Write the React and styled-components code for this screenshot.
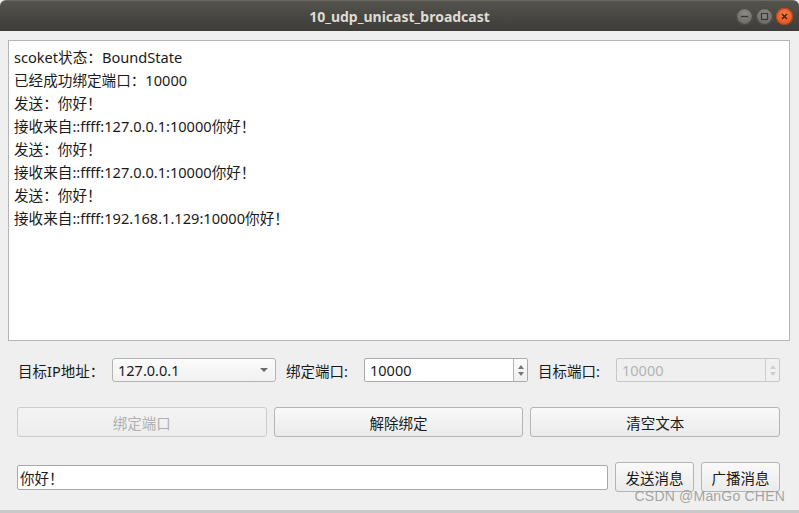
import React from "react"
import styled, { createGlobalStyle } from "styled-components"

const Global = createGlobalStyle`
    html, body {
        margin: 0;
        padding: 0;
        background: #efefef;
    }
    body {
        font-family: "Noto Sans", "Noto Sans CJK SC", sans-serif;
        font-size: 14.5px;
        color: #1a1a1a;
    }
`

const Window = styled.div`
    position: relative;
    width: 799px;
    height: 513px;
    display: flex;
    flex-direction: column;
    background: #efefef;
    box-sizing: border-box;
    border-bottom: 3px solid #c9c9c9;
    overflow: hidden;
`

const TitleBar = styled.div`
    height: 31px;
    flex: none;
    display: flex;
    align-items: center;
    justify-content: center;
    position: relative;
    background: linear-gradient(#54534e, #3d3c38);
    border-top: 1px solid #6a6964;
    border-radius: 6px 6px 0 0;
    box-sizing: border-box;
    color: #dfdbd2;
    font-weight: bold;
    font-size: 14px;
    font-family: "Noto Sans", sans-serif;
`

const WinButtons = styled.div`
    position: absolute;
    right: 6px;
    top: 7px;
    display: flex;
    gap: 3px;
`

const WinButton = styled.div`
    width: 17px;
    height: 17px;
    border-radius: 50%;
    display: flex;
    align-items: center;
    justify-content: center;
    background: ${({close}) => close
        ? "radial-gradient(circle at 50% 35%, #f47a4a, #df4a16)"
        : "radial-gradient(circle at 50% 35%, #8c8b86, #5f5e5a)"};
    box-shadow: inset 0 0 0 1px ${({close}) => close ? "#b9400f" : "#45443f"};
`

const Body = styled.div`
    flex: 1;
    display: flex;
    flex-direction: column;
    padding: 9px 9px 0 8px;
`

const TextArea = styled.div`
    height: 301px;
    box-sizing: border-box;
    background: #fff;
    border: 1px solid #b5b5b5;
    padding: 5px 5px;
    line-height: 23px;
    font-size: 14.6px;
`

const Controls = styled.div`
    display: flex;
    flex-direction: column;
    padding: 0 10px 0 9px;
`

const ParamRow = styled.div`
    margin-top: 17px;
    height: 24px;
    display: grid;
    grid-template-columns: 95px 164px 1fr 164px 1fr 164px;
    align-items: center;
`

const Label = styled.span`
    padding-left: ${({first}) => first ? "1px" : "10px"};
    white-space: nowrap;
`

const Combo = styled.div`
    height: 24px;
    box-sizing: border-box;
    border: 1px solid #b3b3b3;
    border-radius: 3px;
    background: linear-gradient(#fbfbfb, #f1f1f1);
    display: flex;
    align-items: center;
    justify-content: space-between;
    padding: 0 7px 0 5px;
`

const Arrow = styled.span`
    width: 0;
    height: 0;
    border-left: 4px solid transparent;
    border-right: 4px solid transparent;
    border-top: 4px solid #6a6a6a;
`

const Spin = styled.div`
    height: 24px;
    box-sizing: border-box;
    border: 1px solid ${({disabled}) => disabled ? "#c8c8c8" : "#aaaaaa"};
    border-radius: 2px;
    background: ${({disabled}) => disabled ? "#efefef" : "#fff"};
    color: ${({disabled}) => disabled ? "#b4b4b4" : "#1a1a1a"};
    display: flex;
    align-items: stretch;
`

const SpinText = styled.span`
    flex: 1;
    display: flex;
    align-items: center;
    padding-left: 5px;
`

const SpinButtons = styled.div`
    width: 13px;
    border-left: 1px solid ${({disabled}) => disabled ? "#cfcfcf" : "#b5b5b5"};
    background: ${({disabled}) => disabled ? "#f0f0f0" : "linear-gradient(#fbfbfb, #efefef)"};
    display: flex;
    flex-direction: column;
    align-items: center;
    justify-content: center;
    gap: 3px;
`

const Tri = styled.span`
    width: 0;
    height: 0;
    border-left: 3px solid transparent;
    border-right: 3px solid transparent;
    ${({up, c}) => up ? `border-bottom: 4px solid ${c};` : `border-top: 4px solid ${c};`}
`

const ButtonRow = styled.div`
    margin-top: 25px;
    display: grid;
    grid-template-columns: 1fr 1fr 1fr;
    gap: 7px;
`

const Button = styled.div`
    height: 30px;
    box-sizing: border-box;
    border: 1px solid ${({disabled}) => disabled ? "#cdcdcd" : "#b4b4b4"};
    border-radius: 3px;
    background: ${({disabled}) => disabled ? "linear-gradient(#f4f4f4, #ededed)" : "linear-gradient(#f9f9f9, #ebebeb)"};
    color: ${({disabled}) => disabled ? "#b0b0b0" : "#1a1a1a"};
    display: flex;
    align-items: center;
    justify-content: center;
    width: ${({w}) => w ? w + "px" : "auto"};
    flex: none;
`

const SendRow = styled.div`
    margin-top: 25px;
    display: flex;
    align-items: center;
    gap: 7px;
`

const LineEdit = styled.div`
    flex: 1;
    height: 25px;
    box-sizing: border-box;
    border: 1px solid #a8a8a8;
    border-radius: 2px;
    background: #fff;
    display: flex;
    align-items: center;
    padding-left: 2px;
`

const Watermark = styled.div`
    position: absolute;
    right: 14px;
    bottom: 6px;
    color: rgba(150, 150, 150, 0.85);
    font-family: "Liberation Sans", sans-serif;
    font-size: 14px;
    letter-spacing: 0.2px;
`

const log = [
    "scoket状态：BoundState",
    "已经成功绑定端口：10000",
    "发送：你好！",
    "接收来自::ffff:127.0.0.1:10000你好！",
    "发送：你好！",
    "接收来自::ffff:127.0.0.1:10000你好！",
    "发送：你好！",
    "接收来自::ffff:192.168.1.129:10000你好！",
]

export default function App() {
    return (
    <Window>
        <Global />
        <TitleBar>
            10_udp_unicast_broadcast
            <WinButtons>
                <WinButton>
                    <svg width="9" height="9" viewBox="0 0 9 9"><path d="M1 4.5h7" stroke="#3a3935" strokeWidth="1.4" /></svg>
                </WinButton>
                <WinButton>
                    <svg width="9" height="9" viewBox="0 0 9 9"><rect x="1.5" y="1.5" width="6" height="6" fill="none" stroke="#3a3935" strokeWidth="1.2" /></svg>
                </WinButton>
                <WinButton close>
                    <svg width="9" height="9" viewBox="0 0 9 9"><path d="M2 2l5 5M7 2l-5 5" stroke="#4a1a08" strokeWidth="1.4" /></svg>
                </WinButton>
            </WinButtons>
        </TitleBar>
        <Body>
            <TextArea>
                {log.map((l, i) => <div key={i}>{l}</div>)}
            </TextArea>
            <Controls>
                <ParamRow>
                    <Label first>目标IP地址：</Label>
                    <Combo>127.0.0.1<Arrow /></Combo>
                    <Label>绑定端口:</Label>
                    <Spin>
                        <SpinText>10000</SpinText>
                        <SpinButtons><Tri up c="#777" /><Tri c="#777" /></SpinButtons>
                    </Spin>
                    <Label>目标端口:</Label>
                    <Spin disabled>
                        <SpinText>10000</SpinText>
                        <SpinButtons disabled><Tri up c="#cfcfcf" /><Tri c="#cfcfcf" /></SpinButtons>
                    </Spin>
                </ParamRow>
                <ButtonRow>
                    <Button disabled>绑定端口</Button>
                    <Button>解除绑定</Button>
                    <Button>清空文本</Button>
                </ButtonRow>
                <SendRow>
                    <LineEdit>你好！</LineEdit>
                    <Button w={79}>发送消息</Button>
                    <Button w={79}>广播消息</Button>
                </SendRow>
            </Controls>
        </Body>
        <Watermark>CSDN @ManGo CHEN</Watermark>
    </Window>
    )
}
